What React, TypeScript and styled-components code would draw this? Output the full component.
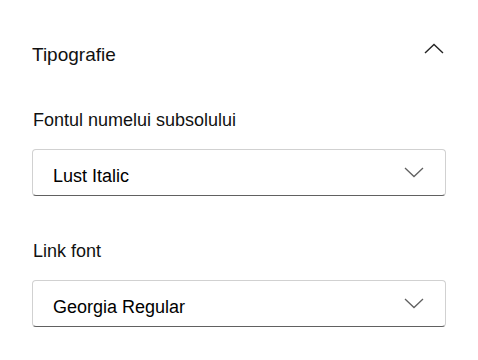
import React from 'react';
import styled, { createGlobalStyle } from 'styled-components';

const GlobalStyle = createGlobalStyle`
  body {
    margin: 0;
    background: #ffffff;
    font-family: "Liberation Sans", Arial, sans-serif;
    color: #111111;
  }
`;

const fields = [
  { label: 'Fontul numelui subsolului', value: 'Lust Italic' },
  { label: 'Link font', value: 'Georgia Regular' },
];

const ChevronUp = () => (
  <svg width="20" height="11" viewBox="0 0 20 11" fill="none">
    <path d="M1 10L10 1.5L19 10" stroke="#242424" strokeWidth="1.4" />
  </svg>
);

const ChevronDown = () => (
  <svg width="20" height="11" viewBox="0 0 20 11" fill="none">
    <path d="M1 1L10 9.5L19 1" stroke="#616161" strokeWidth="1.3" />
  </svg>
);

const App: React.FC = () => {
  return (
    <Panel>
      <GlobalStyle />
      <Header>
        <Title>Tipografie</Title>
        <Toggle>
          <ChevronUp />
        </Toggle>
      </Header>
      {fields.map((field) => (
        <Field key={field.label}>
          <Label>{field.label}</Label>
          <Select>
            <Value>{field.value}</Value>
            <ChevronDown />
          </Select>
        </Field>
      ))}
    </Panel>
  );
};

const Panel = styled.div`
  display: flex;
  flex-direction: column;
  padding: 43px 32px 0;
`;

const Header = styled.div`
  display: flex;
  justify-content: space-between;
  align-items: flex-start;
  height: 24px;
  margin-bottom: 41px;
`;

const Title = styled.h2`
  margin: 0;
  font-size: 19px;
  font-weight: 400;
  line-height: 24px;
`;

const Toggle = styled.span`
  display: flex;
  margin-right: 2px;
`;

const Field = styled.div`
  display: flex;
  flex-direction: column;
  gap: 17px;
  margin-bottom: 43px;
`;

const Label = styled.label`
  font-size: 18px;
  line-height: 24px;
  padding-left: 1px;
`;

const Select = styled.div`
  box-sizing: border-box;
  display: flex;
  align-items: center;
  justify-content: space-between;
  height: 47px;
  padding: 0 21px 0 20px;
  border: 1px solid #d1d1d1;
  border-bottom-color: #616161;
  border-radius: 4px;
  background: #ffffff;
`;

const Value = styled.span`
  font-size: 18px;
  line-height: 24px;
  padding-top: 6px;
  color: #000000;
`;

export default App;
